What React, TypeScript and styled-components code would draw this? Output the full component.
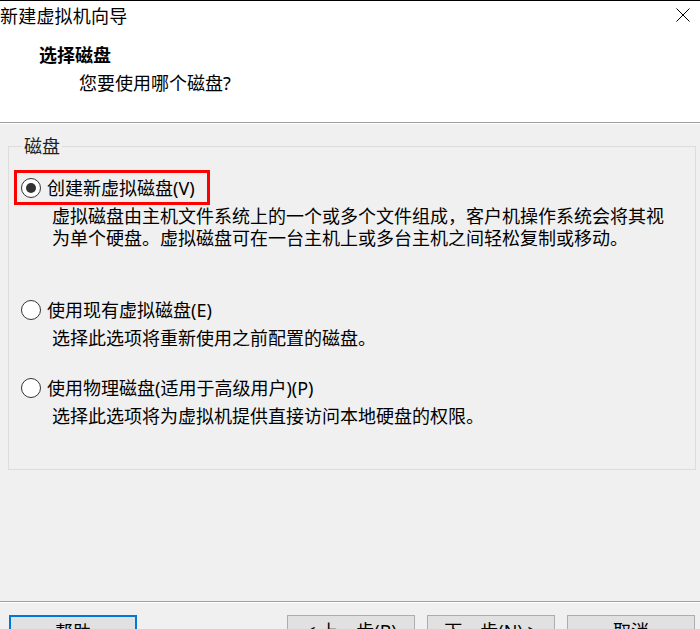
import React from "react";
import styled, { createGlobalStyle } from "styled-components";

const GlobalStyle = createGlobalStyle`
  html, body { margin: 0; padding: 0; background: #f0f0f0; }
  body { font-family: "Noto Sans", "Noto Sans CJK SC", sans-serif; color: #000; }
  * { box-sizing: border-box; }
`;

const Window = styled.div`
  width: 700px;
  height: 629px;
  overflow: hidden;
  display: flex;
  flex-direction: column;
  border-top: 1px solid #000;
  background: #f0f0f0;
`;

const Header = styled.div`
  height: 122px;
  background: #fff;
  border-bottom: 1px solid #a0a0a0;
  display: flex;
  flex-direction: column;
`;

const TitleBar = styled.div`
  height: 30px;
  display: flex;
  align-items: center;
  justify-content: space-between;
  padding-right: 10px;
`;

const TitleText = styled.div`
  font-size: 18px;
  line-height: 30px;
  letter-spacing: 0.2px;
`;

const CloseButton = styled.button`
  width: 14px;
  height: 14px;
  padding: 0;
  border: none;
  background: transparent;
  display: flex;
  margin-top: -2px;
`;

const Heading = styled.div`
  margin: 12px 0 0 39px;
  font-size: 18px;
  line-height: 24px;
  font-weight: 700;
`;

const SubHeading = styled.div`
  margin: 4px 0 0 79px;
  font-size: 18px;
  line-height: 24px;
`;

const Body = styled.div`
  flex: 1;
  border-top: 1px solid #fff;
  padding: 0 4px 0 8px;
`;

const Group = styled.fieldset`
  margin: 12px 0 0 0;
  padding: 0 0 42px 5px;
  border: 1px solid #dcdcdc;
  min-width: 0;
`;

const Legend = styled.legend`
  margin-left: 8px;
  padding: 0 2px;
  font-size: 18px;
  line-height: 20px;
  color: #222;
`;

const OptionRow = styled.label<{ $highlighted?: boolean; $gap: number }>`
  display: inline-flex;
  align-items: center;
  height: 35px;
  margin-top: ${(p) => p.$gap}px;
  padding: 0 12px 0 4px;
  border: 3px solid ${(p) => (p.$highlighted ? "#ff0000" : "transparent")};
  cursor: default;
`;

const RadioCircle = styled.span<{ $checked?: boolean }>`
  width: 20px;
  height: 20px;
  border-radius: 50%;
  border: 1.5px solid #333;
  background: #fff;
  display: flex;
  align-items: center;
  justify-content: center;
  flex-shrink: 0;
  &::after {
    content: "";
    width: 10px;
    height: 10px;
    border-radius: 50%;
    background: #333;
    display: ${(p) => (p.$checked ? "block" : "none")};
  }
`;

const OptionLabel = styled.span`
  margin-left: 6px;
  font-size: 18px;
  line-height: 24px;
  white-space: nowrap;
`;

const Description = styled.div`
  padding-left: 38px;
  font-size: 18px;
  line-height: 22px;
  white-space: nowrap;
`;

const Option = styled.div`
  display: flex;
  flex-direction: column;
  align-items: flex-start;
`;

const Footer = styled.div`
  height: 28px;
  border-top: 1px solid #a0a0a0;
  box-shadow: inset 0 1px 0 #fff;
  display: flex;
  align-items: flex-start;
  padding: 13px 5px 0 9px;
  gap: 12px;
`;

const Spacer = styled.div`
  flex: 1;
`;

const Button = styled.button<{ $focused?: boolean }>`
  width: 128px;
  height: 32px;
  flex-shrink: 0;
  background: #e1e1e1;
  border: ${(p) => (p.$focused ? "2px solid #0078d7" : "1px solid #adadad")};
  font-family: "Noto Sans", "Noto Sans CJK SC", sans-serif;
  font-size: 18px;
  line-height: 24px;
  color: #000;
  padding: 3px 0 0 0;
  display: flex;
  justify-content: center;
  align-items: flex-start;
`;

const options = [
  {
    label: "创建新虚拟磁盘(V)",
    checked: true,
    highlighted: true,
    gap: 14,
    desc: [
      "虚拟磁盘由主机文件系统上的一个或多个文件组成，客户机操作系统会将其视",
      "为单个硬盘。虚拟磁盘可在一台主机上或多台主机之间轻松复制或移动。",
    ],
  },
  {
    label: "使用现有虚拟磁盘(E)",
    gap: 43,
    desc: ["选择此选项将重新使用之前配置的磁盘。"],
  },
  {
    label: "使用物理磁盘(适用于高级用户)(P)",
    gap: 21,
    desc: ["选择此选项将为虚拟机提供直接访问本地硬盘的权限。"],
  },
];

export default function App() {
  return (
    <>
      <GlobalStyle />
      <Window>
        <Header>
          <TitleBar>
            <TitleText>新建虚拟机向导</TitleText>
            <CloseButton aria-label="关闭">
              <svg width="14" height="14" viewBox="0 0 14 14">
                <path d="M0.5 0.5 L13.5 13.5 M13.5 0.5 L0.5 13.5" stroke="#000" strokeWidth="1" fill="none" />
              </svg>
            </CloseButton>
          </TitleBar>
          <Heading>选择磁盘</Heading>
          <SubHeading>您要使用哪个磁盘?</SubHeading>
        </Header>
        <Body>
          <Group>
            <Legend>磁盘</Legend>
            {options.map((o) => (
              <Option key={o.label}>
                <OptionRow $highlighted={o.highlighted} $gap={o.gap}>
                  <RadioCircle $checked={o.checked} />
                  <OptionLabel>{o.label}</OptionLabel>
                </OptionRow>
                {o.desc.map((d) => (
                  <Description key={d}>{d}</Description>
                ))}
              </Option>
            ))}
          </Group>
        </Body>
        <Footer>
          <Button $focused>帮助</Button>
          <Spacer />
          <Button>&lt; 上一步(B)</Button>
          <Button>下一步(N) &gt;</Button>
          <Button>取消</Button>
        </Footer>
      </Window>
    </>
  );
}
